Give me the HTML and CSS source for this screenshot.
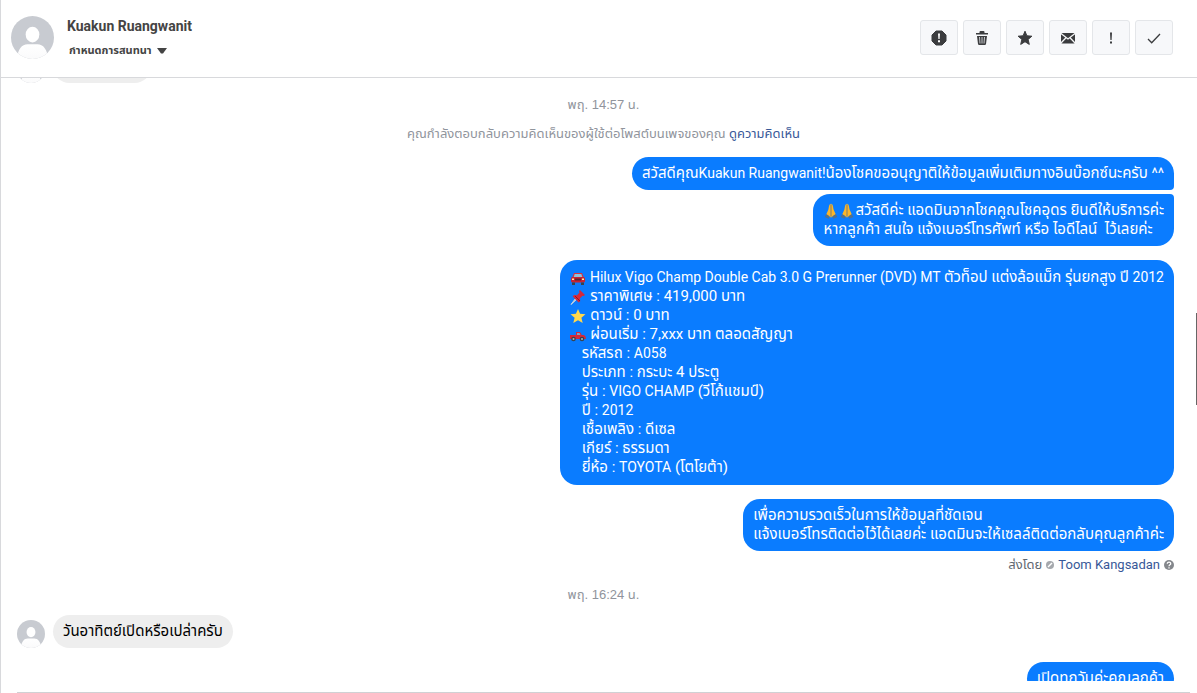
FILE: index.html
```html
<!DOCTYPE html>
<html lang="th">
<head>
  <meta charset="UTF-8">
  <meta name="viewport" content="width=device-width, initial-scale=1.0">
  <title>Kuakun Ruangwanit</title>
  <link rel="stylesheet" href="styles.css">
</head>
<body>
  <!-- shared shapes -->
  <svg class="defs" aria-hidden="true">
    <defs>
      <linearGradient id="face" x1="0" y1="0" x2="0" y2="1">
        <stop offset="0" stop-color="#fff"/>
        <stop offset="1" stop-color="#fafafb"/>
      </linearGradient>
      <clipPath id="round"><circle cx="22" cy="22" r="22"/></clipPath>
      <symbol id="person" viewBox="0 0 44 44">
        <g clip-path="url(#round)">
          <rect width="44" height="44" fill="#c8cbd1"/>
          <ellipse cx="22" cy="19" rx="7" ry="8" fill="#fff"/>
          <path d="M6 44C7 34 11 29 17 29h10c6 0 10 5 11 15z" fill="url(#face)"/>
        </g>
      </symbol>
      <symbol id="pray" viewBox="0 0 16 16">
        <path d="M7.700.8C6 1 6 4 5.400 6.500L3 12l4.700 2.500zM8.300.8C10 1 10 4 10.600 6.500L13 12l-4.700 2.500z" fill="#fbb62a"/>
        <path d="M8 2v11" stroke="#d08c1c" stroke-width=".8"/>
        <path d="M3.200 11l3.500 2.200-1 2.600L1.700 14zM12.800 11l-3.500 2.200 1 2.600 4-1.800z" fill="#51718f"/>
      </symbol>
    </defs>
  </svg>

  <header class="header">
    <svg class="avatar-large"><use href="#person"/></svg>
    <div class="contact">
      <h1 class="contact-name">Kuakun Ruangwanit</h1>
      <button class="assign" type="button">
        <span class="assign-label">กำหนดการสนทนา</span>
        <svg width="10" height="6" viewBox="0 0 10 6"><path d="M0 0h10L6 5.500H4z" fill="#444"/></svg>
      </button>
    </div>
    <div class="actions">
      <button class="action" type="button" aria-label="Report">
        <svg width="16" height="16" viewBox="0 0 16 16"><path d="M5 1h6l4 4v6l-4 4H5l-4-4V5z" fill="#3b3c3e" stroke="#3b3c3e" stroke-linejoin="round"/><path d="M7 3.500h2l-.4 5.500H7.400zM7 10.300h2v2H7z" fill="#fff"/></svg>
      </button>
      <button class="action" type="button" aria-label="Delete">
        <svg width="16" height="16" viewBox="0 0 16 16"><path d="M5.500 3V2q0-1 1-1h3q1 0 1 1v1H14v1.500H2V3z" fill="#3b3c3e"/><path d="M3 6h10l-1 8q-.2 1-1.200 1H5.200Q4.200 15 4 14z" fill="#3b3c3e"/><path d="M5.500 7l.5 6.500M8 7v6.500M10.500 7l-.5 6.500" stroke="#c9cbce"/></svg>
      </button>
      <button class="action" type="button" aria-label="Star">
        <svg width="16" height="16" viewBox="0 0 16 16"><path d="M8 1.200l1.900 4.600 5 .4-3.800 3.200 1.200 5L8 11.700l-4.300 2.700 1.200-5L1.100 6.200l5-.4z" fill="#3b3c3e" stroke="#3b3c3e" stroke-linejoin="round"/></svg>
      </button>
      <button class="action" type="button" aria-label="Mark unread">
        <svg width="16" height="16" viewBox="0 0 16 16"><rect x="1" y="3" width="14" height="10.500" rx="1.500" fill="#3b3c3e"/><path d="M1 3.500l7 5.500 7-5.500M1 13l5-5.300M15 13l-5-5.300" fill="none" stroke="#f5f6f7" stroke-width="1.300"/></svg>
      </button>
      <button class="action" type="button" aria-label="Spam">
        <svg width="16" height="16" viewBox="0 0 16 16"><path d="M7 2.500h2l-.4 7.500H7.400zM7 11.500h2v2H7z" fill="#3b3c3e"/></svg>
      </button>
      <button class="action" type="button" aria-label="Done">
        <svg width="16" height="16" viewBox="0 0 16 16"><path d="M2 9l3.700 3.700L14 4" fill="none" stroke="#3b3c3e" stroke-width="1.300"/></svg>
      </button>
    </div>
  </header>

  <main class="chat">
    <div class="thread">
      <div class="row received">
        <svg class="avatar-small"><use href="#person"/></svg>
        <p class="bubble earlier"></p>
      </div>
      <time class="stamp">พฤ. 14:57 น.</time>
      <p class="note">คุณกำลังตอบกลับความคิดเห็นของผู้ใช้ต่อโพสต์บนเพจของคุณ <a href="#">ดูความคิดเห็น</a></p>

      <p class="bubble sent first">สวัสดีคุณ<span class="latin">Kuakun Ruangwanit!</span>น้องโชคขออนุญาติให้ข้อมูลเพิ่มเติมทางอินบ๊อกซ์นะครับ ^^</p>
      <p class="bubble sent last"><svg class="emoji"><use href="#pray"/></svg><svg class="emoji"><use href="#pray"/></svg>สวัสดีค่ะ แอดมินจากโชคคูณโชคอุดร ยินดีให้บริการค่ะ
หากลูกค้า สนใจ แจ้งเบอร์โทรศัพท์ หรือ ไอดีไลน์&nbsp; ไว้เลยค่ะ</p>

      <p class="bubble sent details"><svg class="emoji" viewBox="0 0 16 16"><path d="M4 3h8l2 5H2z" fill="#d8313d"/><path d="M4.700 4h6.600l1 3H3.700z" fill="#8dc3dc"/><rect x="1" y="7" width="14" height="5.500" rx="1.500" fill="#c82333"/><path d="M5 8.500h6v2H5z" fill="#5b2630"/><path d="M2 8.500h2v1.500H2zM12 8.500h2v1.500h-2z" fill="#ffe8a0"/><path d="M2 12.500h3V15H2zM11 12.500h3V15h-3z" fill="#39434c"/></svg><span class="latin"> Hilux Vigo Champ Double Cab 3.0 G Prerunner (DVD) MT </span>ตัวท็อป แต่งล้อแม็ก รุ่นยกสูง ปี <span class="latin">2012</span>
<svg class="emoji" viewBox="0 0 16 16"><path d="M5.500 9.500l1 1L1 15.500z" fill="#c3d2df" stroke="#c3d2df"/><path d="M10 1l5 5-1.500 1-1-.3-2.500 2.500.2 3-1.500 1.300-6-6L4 6l3 .2L9.500 3.500 9 2z" fill="#d62839"/><path d="M5 7l5 5" stroke="#8f1523"/></svg> ราคาพิเศษ : 419,000 บาท
<svg class="emoji" viewBox="0 0 16 16"><path d="M8 1l2.100 4.800 5.400.5-4.100 3.500 1.300 5.200L8 12.300 3.300 15l1.300-5.200L.5 6.300l5.400-.5z" fill="#ffd84d"/></svg> ดาวน์ : 0 บาท
<svg class="emoji" viewBox="0 0 16 16"><path d="M6 5h4l2 3.500H6z" fill="#d62839"/><path d="M7 6h2.500l1.200 2.500H7z" fill="#7aa5c4"/><path d="M0 8h14q2 1 2 4H0z" fill="#d62839"/><circle cx="3.500" cy="12" r="2.300" fill="#39434c"/><circle cx="12" cy="12" r="2.300" fill="#39434c"/><circle cx="3.500" cy="12" r="1" fill="#aab4bc"/><circle cx="12" cy="12" r="1" fill="#aab4bc"/></svg> ผ่อนเริ่ม : 7,xxx บาท ตลอดสัญญา
   รหัสรถ : <span class="latin">A058</span>
   ประเภท : กระบะ 4 ประตู
   รุ่น : <span class="latin">VIGO CHAMP</span> (วีโก้แชมป์)
   ปี : <span class="latin">2012</span>
   เชื้อเพลิง : ดีเซล
   เกียร์ : ธรรมดา
   ยี่ห้อ : <span class="latin">TOYOTA</span> (โตโยต้า)</p>

      <p class="bubble sent">เพื่อความรวดเร็วในการให้ข้อมูลที่ชัดเจน
แจ้งเบอร์โทรติดต่อไว้ได้เลยค่ะ แอดมินจะให้เซลล์ติดต่อกลับคุณลูกค้าค่ะ</p>
      <p class="sender">
        <span>ส่งโดย</span>
        <svg width="8" height="8" viewBox="0 0 8 8"><circle cx="4" cy="4" r="4" fill="#a5a8ad"/><path d="M2 6l4-4" stroke="#fff" stroke-width="1.500"/></svg>
        <a href="#">Toom Kangsadan</a>
        <svg class="help" width="10" height="10" viewBox="0 0 10 10"><circle cx="5" cy="5" r="5" fill="#84878c"/><path d="M3.300 3.800C3.300 1.500 6.800 1.700 6.700 3.700 6.700 4.900 5 4.800 5 6.200M5 7.200v1.200" fill="none" stroke="#fff" stroke-width="1.300"/></svg>
      </p>

      <time class="stamp">พฤ. 16:24 น.</time>
      <div class="row received">
        <svg class="avatar-small"><use href="#person"/></svg>
        <p class="bubble">วันอาทิตย์เปิดหรือเปล่าครับ</p>
      </div>
      <p class="bubble sent">เปิดทุกวันค่ะคุณลูกค้า</p>
    </div>
    <div class="scrollbar"></div>
  </main>
  <footer class="composer"></footer>
</body>
</html>
```
FILE: styles.css
```css
* {
  box-sizing: border-box;
}

body {
  display: flex;
  flex-direction: column;
  height: 100vh;
  margin: 0;
  border-left: 1px solid #d8d9dc;
  background: #fff;
  color: #444;
  font-family: Roboto, "Noto Sans Thai", "Noto Sans", sans-serif;
  font-size: 14px;
  line-height: 19px;
  overflow: hidden;
}

p,
h1 {
  margin: 0;
}

a {
  color: #385898;
  text-decoration: none;
}

button {
  font-family: inherit;
  color: inherit;
  cursor: pointer;
}

.defs {
  position: absolute;
  width: 0;
  height: 0;
}

/* header */
.header {
  display: flex;
  flex: none;
  height: 78px;
  padding: 16px 24px 0 10px;
  border-bottom: 1px solid #d8d9dc;
}

.avatar-large {
  width: 43px;
  height: 43px;
}

.contact {
  margin-left: 13px;
}

.contact-name {
  font-size: 14px;
  font-weight: 700;
  line-height: 21px;
}

.assign {
  display: flex;
  align-items: center;
  gap: 5px;
  margin-top: 10px;
  padding: 0 2px;
  border: 0;
  background: none;
  font-size: 11px;
  font-weight: 700;
}

.assign-label {
  height: 8px;
  line-height: 8px;
  overflow: hidden;
}

.actions {
  display: flex;
  gap: 5px;
  margin-left: auto;
  padding-top: 4px;
}

.action {
  display: flex;
  align-items: center;
  justify-content: center;
  width: 38px;
  height: 35px;
  padding: 0;
  border: 1px solid #e4e6e9;
  border-radius: 3px;
  background: #f7f8fa;
}

/* messages */
.chat {
  position: relative;
  flex: 1;
  min-height: 0;
  overflow: hidden;
}

.thread {
  display: flex;
  flex-direction: column;
  margin-top: -28px;
  padding: 0 7px 0 16px;
}

.row {
  display: flex;
  align-items: flex-end;
  gap: 8px;
}

.avatar-small {
  width: 28px;
  height: 28px;
}

.bubble {
  padding: 7px 10px;
  border-radius: 17px;
  background: #eee;
  color: #000;
  font-size: 15px;
  white-space: pre-wrap;
}

.latin {
  font-size: 14px;
  line-height: 1;
}

.earlier {
  width: 98px;
  height: 33px;
}

.sent {
  align-self: flex-end;
  margin: 14px 16px 0 0;
  background: #0a7cff;
  color: #fff;
}

.first {
  border-bottom-right-radius: 4px;
}

.last {
  margin-top: 4px;
  border-top-right-radius: 4px;
}

.details {
  padding: 8px 10px;
}

.emoji {
  width: 16px;
  height: 16px;
  vertical-align: -4px;
}

.stamp,
.note {
  color: #90949c;
  font-size: 13px;
  line-height: 16px;
  text-align: center;
}

.note {
  line-height: 18px;
}

.stamp {
  margin: 14px 0 12px;
  font-family: "Liberation Sans", "Noto Sans Thai", sans-serif;
}

.sender {
  display: flex;
  align-items: center;
  justify-content: flex-end;
  gap: 4px;
  margin: 6px 16px 0 0;
  color: #606770;
  font-size: 13px;
  line-height: 16px;
}

/* thin thumb on the window edge */
.scrollbar {
  position: absolute;
  top: 39%;
  right: 0;
  width: 1px;
  height: 92px;
  background: #666;
}

.composer {
  flex: none;
  height: 12px;
  margin: 0 7px 0 16px;
  border-bottom: 1px solid #d0d1d4;
}
```
